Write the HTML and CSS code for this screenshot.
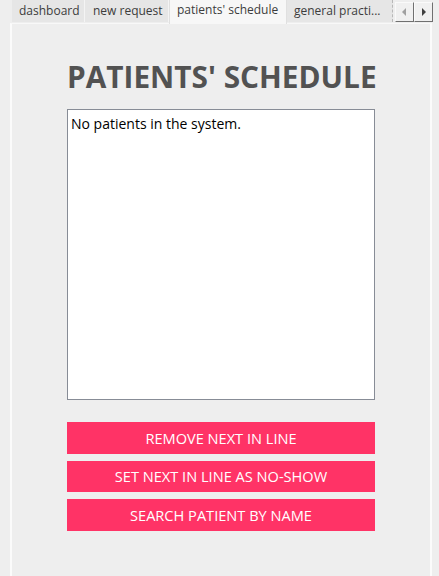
FILE: index.html
```html
<!DOCTYPE html>
<html>
<head>
<meta charset="utf-8">
<link rel="stylesheet" href="styles.css">
</head>
<body>
<div class="window">
  <div class="tabbar">
    <div class="tab t1">dashboard</div>
    <div class="tab t2">new request</div>
    <div class="tab t3 selected">patients' schedule</div>
    <div class="tab t4 last">general practi...</div>
    <div class="scrollers">
      <div class="arrow"><svg width="7" height="10" viewBox="0 0 7 10"><polygon points="5,1 1,5 5,9" fill="#a0a0a0"/></svg></div>
      <div class="arrow"><svg width="7" height="10" viewBox="0 0 7 10"><polygon points="2,1 6,5 2,9" fill="#404040"/></svg></div>
    </div>
  </div>
  <div class="panel">
    <h1 class="title">PATIENTS' SCHEDULE</h1>
    <div class="list">No patients in the system.</div>
    <div class="buttons">
      <button class="btn">REMOVE NEXT IN LINE</button>
      <button class="btn">SET NEXT IN LINE AS NO-SHOW</button>
      <button class="btn">SEARCH PATIENT BY NAME</button>
    </div>
  </div>
</div>
</body>
</html>
```

FILE: styles.css
```css
* { box-sizing: border-box; }
html, body {
  margin: 0;
  padding: 0;
  background: #eeeeee;
  width: 439px;
  height: 576px;
  overflow: hidden;
  font-family: "Open Sans", "Noto Sans", sans-serif;
}
.window {
  display: flex;
  flex-direction: column;
  height: 576px;
}
.tabbar {
  display: flex;
  align-items: flex-start;
  height: 24px;
  padding-left: 12px;
  position: relative;
}
.tab {
  height: 22px;
  padding: 0 0 0 7px;
  font-size: 12px;
  line-height: 22px;
  color: #3c3c3c;
  background: #e6e6e6;
  border-right: 1px solid #f4f4f4;
  white-space: nowrap;
  overflow: hidden;
  flex: none;
}
.t1 { width: 73px; }
.t2 { width: 84px; padding-left: 8px; }
.t3 { width: 118px; padding-left: 7px; }
.t4 { width: 106px; padding-left: 7px; }
.tab.selected {
  height: 24px;
  background: #f7f7f7;
  line-height: 20px;
  border-left: 1px solid #e0e0e0;
  border-right: 1px solid #e0e0e0;
  z-index: 1;
}
.tab.last {
  border-right: 1px dashed #b8b8b8;
}
.scrollers {
  display: flex;
  margin-top: 2px;
  margin-left: 2px;
}
.arrow {
  width: 19px;
  height: 20px;
  background: #f0f0f0;
  border: 1px solid #fafafa;
  border-right-color: #707070;
  border-bottom-color: #707070;
  display: flex;
  align-items: center;
  justify-content: center;
}
.panel {
  flex: 1;
  margin: -1px 7px 0 10px;
  background: #eeeeee;
  border-left: 2px solid #fbfbfb;
  border-right: 2px solid #fbfbfb;
  border-top: 1px solid #f8f8f8;
  display: flex;
  flex-direction: column;
  align-items: flex-start;
  padding-left: 55px;
}
.title {
  margin: 33px 0 0 0;
  font-family: "Open Sans", sans-serif;
  font-weight: 700;
  font-size: 29.8px;
  line-height: 40px;
  color: #525252;
  width: 308px;
  text-align: center;
  white-space: nowrap;
}
.list {
  margin-top: 12px;
  width: 308px;
  height: 291px;
  background: #ffffff;
  border: 1px solid #878c96;
  padding: 5px 3px;
  font-size: 14px;
  line-height: 18px;
  color: #000;
}
.buttons {
  margin-top: 22px;
  display: flex;
  flex-direction: column;
  gap: 7px;
}
.btn {
  width: 308px;
  height: 31.5px;
  border: none;
  background: #ff3366;
  color: #ffffff;
  font-family: "Open Sans", sans-serif;
  font-size: 14.6px;
  padding: 0;
}
```
